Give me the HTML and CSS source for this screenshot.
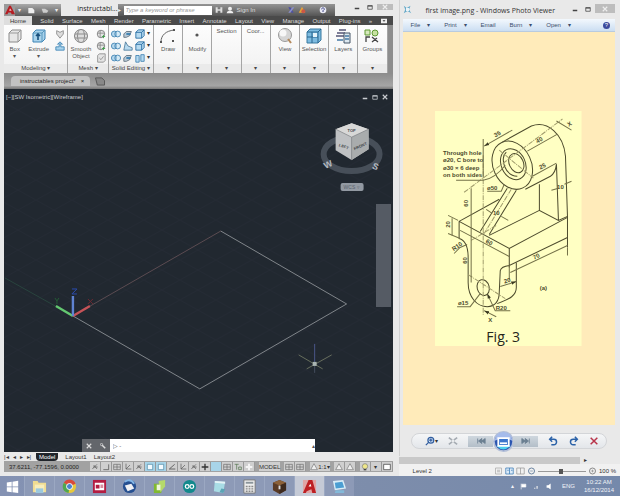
FILE: index.html
```html
<!DOCTYPE html>
<html lang="en">
<head>
  <meta charset="utf-8">
  <title>Desktop</title>
  <link rel="stylesheet" href="styles.css">
</head>
<body>
  <svg class="defs" aria-hidden="true">
    <symbol id="box" viewBox="0 0 16 16"><path d="M2 5l3-3h9v9l-3 3H2z" fill="#e6e6e6" stroke="#8a8a8a"/><path d="M2 5h9v9M11 5l3-3" fill="none" stroke="#999"/></symbol>
    <symbol id="bluebox" viewBox="0 0 16 16"><path d="M2 5l3-3h9v9l-3 3H2z" fill="#a9d3ec" stroke="#3c83b5"/><path d="M2 5h9v9M11 5l3-3" fill="none" stroke="#5797bd"/><path d="M7 12V6M5 8l2-2 2 2" fill="none" stroke="#174f7c" stroke-width="1.6"/></symbol>
    <symbol id="ball" viewBox="0 0 16 16"><circle cx="8" cy="8" r="6.5" fill="#ddd" stroke="#858585"/><path d="M2 6h12M2 10h12M6 2c-2 4-2 8 0 12M10 2c2 4 2 8 0 12" fill="none" stroke="#8d8d8d"/></symbol>
    <symbol id="union" viewBox="0 0 12 12"><circle cx="4" cy="6" r="3.5" fill="#b5d8ee" stroke="#3c7fb0"/><circle cx="8" cy="6" r="3.5" fill="#d4eaf6" stroke="#3c7fb0"/><path d="M6 3v6" stroke="#3c7fb0"/></symbol>
    <symbol id="face" viewBox="0 0 12 12"><path d="M1 6l3-3h6L8 8 4 10H1z" fill="#b9c9d6" stroke="#5a6b79"/><path d="M4 6h5" stroke="#2e78ad" stroke-width="2"/></symbol>
    <symbol id="cube" viewBox="0 0 12 12"><path d="M1 4l3-3h7v7l-3 3H1z" fill="#b7daf0" stroke="#1f669e"/><path d="M1 4h7v7M8 4l3-3" fill="none" stroke="#1f669e"/></symbol>
    <symbol id="meshplus" viewBox="0 0 12 12"><circle cx="6" cy="6" r="4.5" fill="#e5e5e5" stroke="#777"/><path d="M2 5h8M5 2v8" stroke="#888"/><path d="M7 9h4M9 7v4" stroke="#3a9a45"/></symbol>
    <symbol id="gridbox" viewBox="0 0 12 12"><path d="M1 2h10v8H1zM6 2v8M1 6h10" fill="none" stroke="#6b6b6b"/></symbol>
    <symbol id="axis" viewBox="0 0 12 12"><path d="M3 1v8h8M3 9l6-6" fill="none" stroke="#555"/></symbol>
    <symbol id="plus" viewBox="0 0 12 12"><path d="M6 1v10M1 6h10" stroke="#333" stroke-width="2"/></symbol>
    <symbol id="tri" viewBox="0 0 12 12"><path d="M6 1l5 9H1z" fill="#eee" stroke="#777"/></symbol>
    <symbol id="snap" viewBox="0 0 12 12"><path d="M2 9l7-7M4 3l5 6M3 6h7" fill="none" stroke="#555"/></symbol>
    <symbol id="min" viewBox="0 0 8 8"><path d="M1 6h6" stroke="currentColor" stroke-width="2"/></symbol>
    <symbol id="max" viewBox="0 0 8 8"><path d="M1 2h6v5H1zM1 3h6" fill="none" stroke="currentColor"/></symbol>
    <symbol id="close" viewBox="0 0 8 8"><path d="M1 1l6 6M7 1L1 7" stroke="currentColor" stroke-width="1.5"/></symbol>
  </svg>

  <div class="desktop">
    <!-- CAD window -->
    <section class="cad">
      <header class="cad-title">
        <button class="cad-logo" aria-label="Application menu"><svg viewBox="0 0 12 12"><path d="M0 11L5 1h2l5 10H8L7 9H4l-1 2z" fill="#b51c22"/><path d="M5 7l1-3 2 3z" fill="#f4c8c8"/></svg></button>
        <div class="quick">
          <span>▾</span>
          <svg viewBox="0 0 12 12"><path d="M2 3h6l3 3v5H2z" fill="#eee"/></svg>
          <svg viewBox="0 0 12 12"><path d="M1 4h5l5 3-2 3H3z" fill="#ccc"/></svg>
          <span>▾</span>
        </div>
        <h1 class="cad-name">instructabl...</h1>
        <div class="infobar">
          <span>▸</span>
          <input class="search" type="text" aria-label="Search" placeholder="Type a keyword or phrase">
          <svg viewBox="0 0 12 12"><path d="M1 2h3v3h4V2h3v8H8V7H4v3H1z" fill="#ddd"/></svg>
          <svg viewBox="0 0 12 12"><circle cx="6" cy="4" r="3" fill="#eee"/><path d="M1 11c0-5 10-5 10 0z" fill="#eee"/></svg>
          <a href="#" class="signin">Sign In</a>
          <svg viewBox="0 0 12 12"><path d="M2 2h3l5 8H7z" fill="#4b4ea8"/><path d="M8 2h3L5 10H2z" fill="#8a8ecb"/></svg>
          <svg viewBox="0 0 12 12"><path d="M6 1l5 9H1z" fill="#e5a43b"/><circle cx="8" cy="8" r="3" fill="#cc5746"/></svg>
          <svg viewBox="0 0 12 12" class="help"><circle cx="6" cy="6" r="5" fill="#e9eaf5"/><path d="M4 5c0-3 4-3 4 0L6 7v2" fill="none" stroke="#3c4284" stroke-width="1.5"/></svg>
        </div>
        <div class="win-buttons">
          <button aria-label="Minimize"><svg><use href="#min"/></svg></button>
          <button aria-label="Maximize"><svg><use href="#max"/></svg></button>
          <button class="win-close" aria-label="Close"><svg><use href="#close"/></svg></button>
        </div>
      </header>

      <nav class="ribbon-tabs">
        <button class="active">Home</button>
        <button>Solid</button>
        <button>Surface</button>
        <button>Mesh</button>
        <button>Render</button>
        <button>Parametric</button>
        <button>Insert</button>
        <button>Annotate</button>
        <button>Layout</button>
        <button>View</button>
        <button>Manage</button>
        <button>Output</button>
        <button>Plug-ins</button>
        <button>»</button>
        <button aria-label="Ribbon display"><svg viewBox="0 0 10 8"><path d="M1 1h8v6H1z" fill="#eee"/><path d="M3 3h4L5 5z" fill="#333"/></svg></button>
      </nav>

      <div class="ribbon">
        <div class="panel">
          <div class="tools">
            <button class="tool"><svg><use href="#box"/></svg>Box<i>▾</i></button>
            <button class="tool"><svg><use href="#bluebox"/></svg>Extrude<i>▾</i></button>
            <div class="mini one">
              <button aria-label="Polysolid"><svg viewBox="0 0 12 12"><path d="M2 2l4 2 4-2v4l-4 5-4-5z" fill="#ddd" stroke="#888"/></svg></button>
              <button aria-label="Presspull"><svg viewBox="0 0 12 12"><path d="M1 7h4V3L3 4l3-3 3 3-2-1v4h4v4H1z" fill="#a9d3ec" stroke="#3c83b5"/></svg></button>
            </div>
          </div>
          <div class="panel-name">Modeling <i>▾</i></div>
        </div>
        <div class="panel">
          <div class="tools">
            <button class="tool"><svg><use href="#ball"/></svg>Smooth<br>Object</button>
            <div class="mini one">
              <button aria-label="Smooth more"><svg><use href="#meshplus"/></svg></button>
              <button aria-label="Smooth less"><svg><use href="#meshplus"/></svg></button>
              <button aria-label="Refine mesh"><svg viewBox="0 0 12 12"><path d="M2 3l2-2h7v8l-2 2H2z" fill="#e4e4e4" stroke="#888"/><path d="M4 6l2 2 3-4" fill="none" stroke="#888"/></svg></button>
            </div>
          </div>
          <div class="panel-name">Mesh <i>▾</i></div>
        </div>
        <div class="panel">
          <div class="tools">
            <div class="mini three">
              <button aria-label="Union"><svg><use href="#union"/></svg></button>
              <button aria-label="Slice"><svg><use href="#face"/></svg></button>
              <button aria-label="Extrude faces"><svg><use href="#cube"/></svg></button>
              <i>▾</i>
              <button aria-label="Subtract"><svg><use href="#union"/></svg></button>
              <button aria-label="Thicken"><svg viewBox="0 0 12 12"><path d="M3 1l3 5 5 2v3H1z" fill="#b7daf0" stroke="#4b7797"/></svg></button>
              <button aria-label="Extract edges"><svg><use href="#cube"/></svg></button>
              <i>▾</i>
              <button aria-label="Intersect"><svg><use href="#union"/></svg></button>
              <button aria-label="Interfere"><svg><use href="#face"/></svg></button>
              <button aria-label="Separate"><svg viewBox="0 0 12 12"><path d="M1 3h4v8H1zM7 2h4v8H7z" fill="#b7daf0" stroke="#3c7fb0"/></svg></button>
              <i>▾</i>
            </div>
          </div>
          <div class="panel-name">Solid Editing <i>▾</i></div>
        </div>
        <div class="panel">
          <button class="tool"><svg viewBox="0 0 16 16"><path d="M1 14C1 7 6 3 14 2" fill="none" stroke="#666"/><path d="M0 13h2v2H0zM13 1h2v2h-2zM12 12h2v2h-2z" fill="#555"/></svg>Draw</button>
          <div class="panel-name"><i>▾</i></div>
        </div>
        <div class="panel">
          <button class="tool"><svg viewBox="0 0 16 16"><circle cx="8" cy="7" r="1.6" fill="#555"/></svg>Modify</button>
          <div class="panel-name"><i>▾</i></div>
        </div>
        <div class="panel">
          <button class="tool">Section</button>
          <div class="panel-name"><i>▾</i></div>
        </div>
        <div class="panel">
          <button class="tool">Coor...</button>
          <div class="panel-name"><i>▾</i></div>
        </div>
        <div class="panel">
          <button class="tool"><svg viewBox="0 0 16 16"><circle cx="8" cy="7" r="6.5" fill="#d5d5d5" stroke="#999"/><circle cx="6" cy="5" r="3.5" fill="#f7f7f7"/><path d="M11 11l3 4" stroke="#b48a5d" stroke-width="2"/></svg>View</button>
          <div class="panel-name"><i>▾</i></div>
        </div>
        <div class="panel">
          <button class="tool"><svg viewBox="0 0 16 16"><path d="M1 4l3-3h11v11l-3 3H1z" fill="#7dbbe0" stroke="#38789f"/><path d="M1 4h11v11M12 4l3-3M1 9h11M6 4v11" fill="none" stroke="#27658e"/><path d="M7 5h4v4H7z" fill="#e5f3fa"/></svg>Selection</button>
          <div class="panel-name"><i>▾</i></div>
        </div>
        <div class="panel">
          <button class="tool"><svg viewBox="0 0 16 16"><path d="M4 2h7M2 5h8M1 8h8" stroke="#557" stroke-width="1.6"/><path d="M9 5h6v10H9z" fill="#dde8f0" stroke="#456"/><path d="M10 8h4M10 11h4M2 12h6" stroke="#4679a5" stroke-width="1.5"/></svg>Layers</button>
          <div class="panel-name"><i>▾</i></div>
        </div>
        <div class="panel">
          <button class="tool"><svg viewBox="0 0 16 16"><path d="M1 2h5v5H1z" fill="#d7e9bd" stroke="#5e9a33"/><circle cx="11" cy="5" r="3" fill="#c7e2a1" stroke="#5e9a33"/><path d="M2 14v-5h4M8 9l6 5M13 10l-5 4" fill="none" stroke="#444" stroke-width="1.3"/></svg>Groups</button>
          <div class="panel-name"><i>▾</i></div>
        </div>
      </div>

      <div class="doc-tabs">
        <div class="doc-tab">instructables project* <button aria-label="Close drawing">×</button></div>
        <button class="new-tab" aria-label="New drawing"><svg viewBox="0 0 12 10"><path d="M1 1h7l3 3v5H3z" fill="#888" stroke="#555"/></svg></button>
      </div>

      <main class="canvas">
        <svg class="model" viewBox="4 89 389 363">
          <defs>
            <pattern id="iso" width="36" height="20" patternUnits="userSpaceOnUse">
              <path d="M0 0l36 20M0 20L36 0" stroke="#272e37" stroke-width=".6"/>
            </pattern>
          </defs>
          <rect x="4" y="89" width="389" height="363" fill="url(#iso)"/>
          <path d="M5 278l68 38" stroke="#29443e"/>
          <path d="M73 316l148-85" stroke="#5b4b51"/>
          <path d="M221 231l126 73-147 85L73 316" fill="none" stroke="#81868b"/>
          <path d="M73 316l-17-10" stroke="#64c871" stroke-width="2.4"/>
          <path d="M73 316l17-10" stroke="#c65358" stroke-width="2.4"/>
          <path d="M73 316v-20" stroke="#5f83d2" stroke-width="2.4"/>
          <g fill="none" stroke-width="1">
            <path d="M55 298l2 3 2-3M57 301v3" stroke="#245c35"/>
            <path d="M88 299l5 5M93 299l-5 5" stroke="#6d2831"/>
            <path d="M72 289h5l-5 5h5" stroke="#2a4bb0"/>
          </g>
          <path d="M315 344v18" stroke="#4a5688"/>
          <path d="M315 364v9" stroke="#444d5c"/>
          <path d="M299 355l24 14M307 369l25-14" stroke="#666d5c"/>
          <path d="M313 362h4v4h-4z" fill="#aab5b2"/>
          <!-- view cube -->
          <ellipse cx="352" cy="154" rx="28" ry="17" fill="none" stroke="#474f59" stroke-width="6"/>
          <path d="M336 129l16-6 17 6v20l-17 11-16-10z" fill="#bfc1c3"/>
          <path d="M336 129l16-6 17 6-17 8z" fill="#d8d8d7"/>
          <path d="M352 137l17-8v20l-17 11z" fill="#a9acad"/>
          <path d="M336 129l16 8 17-8M352 137v23" fill="none" stroke="#7c7f83" stroke-width=".7"/>
          <g class="cube-text">
            <text x="348" y="132">TOP</text>
            <text x="339" y="146" transform="rotate(20 339 146)">LEFT</text>
            <text x="355" y="150" transform="rotate(-24 355 150)">FRONT</text>
          </g>
          <g class="compass">
            <text x="326" y="169" transform="rotate(-25 326 169)">W</text>
            <text x="372" y="168" transform="rotate(25 372 168)">S</text>
          </g>
          <rect x="341" y="183" width="23" height="8" rx="2" fill="#9299a2"/>
          <text class="wcs" x="344" y="189">WCS ▿</text>
        </svg>
        <div class="view-head">
          <span>[−][SW Isometric][Wireframe]</span>
          <div class="view-buttons">
            <button aria-label="Minimize view"><svg><use href="#min"/></svg></button>
            <button aria-label="Restore view"><svg><use href="#max"/></svg></button>
            <button aria-label="Close view"><svg><use href="#close"/></svg></button>
          </div>
        </div>
        <div class="nav-bar"></div>
        <div class="command">
          <button aria-label="Close command line"><svg><use href="#close"/></svg></button>
          <button aria-label="Customize"><svg viewBox="0 0 8 8"><circle cx="2" cy="2" r="1.5" fill="none" stroke="currentColor"/><path d="M3 3l4 4" fill="none" stroke="currentColor" stroke-width="2"/></svg></button>
          <input type="text" aria-label="Command" value="▷ -">
          <span>▴</span>
        </div>
      </main>

      <div class="layouts">
        <div class="steps"><button>|◂</button><button>◂</button><button>▸</button><button>▸|</button></div>
        <button class="layout active">Model</button>
        <button class="layout">Layout1</button>
        <button class="layout">Layout2</button>
      </div>

      <footer class="status">
        <span class="coords">37.6211, -77.1596, 0.0000</span>
        <div class="toggles">
          <button aria-label="Infer"><svg><use href="#snap"/></svg></button>
          <button aria-label="Snap"><svg viewBox="0 0 12 12"><path d="M2 10h8V2" fill="none" stroke="#444"/></svg></button>
          <button aria-label="Grid"><svg><use href="#gridbox"/></svg></button>
          <button aria-label="Ortho"><svg><use href="#axis"/></svg></button>
          <button aria-label="Polar"><svg><use href="#snap"/></svg></button>
          <button class="on" aria-label="Object snap"><svg viewBox="0 0 12 12"><path d="M2 2h8v8H2z" fill="#f4fbff" stroke="#4885a3"/></svg></button>
          <button class="on" aria-label="3D snap"><svg viewBox="0 0 12 12"><path d="M2 2h8v8H2z" fill="#f4fbff" stroke="#4885a3"/></svg></button>
          <button aria-label="Tracking"><svg viewBox="0 0 12 12"><path d="M10 2L2 9h9" fill="none" stroke="#333"/></svg></button>
          <button aria-label="Dynamic UCS"><svg><use href="#axis"/></svg></button>
          <button aria-label="Dynamic input"><svg><use href="#snap"/></svg></button>
          <button aria-label="Lineweight"><svg><use href="#plus"/></svg></button>
          <button class="on" aria-label="Transparency"></button>
          <button aria-label="Quick properties"><svg><use href="#gridbox"/></svg></button>
          <button aria-label="Cycling"><svg viewBox="0 0 12 12"><path d="M1 2h6M4 2v8M7 6h4v4H7z" fill="none" stroke="#4d7047"/></svg></button>
          <button aria-label="Monitor"><svg viewBox="0 0 12 12"><path d="M6 1v10M1 6h10" stroke="#f4f4f4" stroke-width="3"/></svg></button>
        </div>
        <button class="model-btn">MODEL</button>
        <div class="toggles pair">
          <button aria-label="Layouts"><svg><use href="#gridbox"/></svg></button>
          <button aria-label="Drawings"><svg><use href="#gridbox"/></svg></button>
        </div>
        <button class="scale"><svg><use href="#tri"/></svg>1:1▾</button>
        <div class="toggles pair">
          <button aria-label="Annotation"><svg><use href="#tri"/></svg></button>
          <button aria-label="Auto scale"><svg><use href="#tri"/></svg></button>
        </div>
        <div class="toggles trio">
          <button aria-label="Isolate"><svg viewBox="0 0 12 12"><circle cx="6" cy="5" r="4" fill="#eee68a" stroke="#777"/><path d="M4 10h4" stroke="#444" stroke-width="2"/></svg></button>
          <button aria-label="Menu">▾</button>
          <button aria-label="Clean screen"><svg viewBox="0 0 12 12"><path d="M1 2h10v8H1z" fill="#fff" stroke="#333"/></svg></button>
        </div>
      </footer>
    </section>

    <!-- Photo viewer -->
    <div class="side">
      <section class="viewer">
        <header class="viewer-title">
          <svg class="viewer-icon" viewBox="0 0 12 12"><path d="M1 1l4 3 5-3-2 5 3 5-5-3-5 3 2-5z" fill="#64a9c9"/><path d="M4 4h4v4H4z" fill="#e8f4fa"/></svg>
          <h2>first image.png - Windows Photo Viewer</h2>
          <div class="win-buttons">
            <button aria-label="Minimize"><svg><use href="#min"/></svg></button>
            <button aria-label="Maximize"><svg><use href="#max"/></svg></button>
            <button class="win-close" aria-label="Close"><svg><use href="#close"/></svg></button>
          </div>
        </header>
        <nav class="menu">
          <button>File<i>▾</i></button>
          <button>Print<i>▾</i></button>
          <button>Email</button>
          <button>Burn<i>▾</i></button>
          <button>Open<i>▾</i></button>
          <button class="menu-help" aria-label="Help">?</button>
        </nav>
        <div class="photo">
          <svg class="figure" viewBox="436 111 146 235">
            <defs>
              <marker id="arr" viewBox="0 0 6 6" refX="6" refY="3" markerWidth="5" markerHeight="5" orient="auto-start-reverse"><path d="M0 1l6 2-6 2z" fill="#3b3a22"/></marker>
            </defs>
            <rect x="436" y="111" width="146" height="235" fill="#ffffc3"/>
            <g class="outline">
              <ellipse cx="513" cy="165" rx="19" ry="25" transform="rotate(-25 513 165)"/>
              <ellipse cx="514" cy="164" rx="12" ry="16" transform="rotate(-25 514 164)"/>
              <path d="M507 152c-7 6-1 24 11 24"/>
              <ellipse cx="517" cy="163" rx="7" ry="10" transform="rotate(-25 517 163)"/>
              <path d="M503 142l29-16c16-6 32 8 34 30l2 60v31"/>
              <path d="M526 189l25-13q5-3 6-12l2 56M540 184v26l19 10 9-4M540 210l-50 25"/>
              <path d="M508 188l-27 43M517 190l-27 44"/>
              <path d="M460 221l40-22M460 221l50 27 58-31M460 221v17c7 2 9 9 9 19v25c0 15 9 24 19 24 8 0 12-6 12-14l1-22q1-4 9-5l58-28M510 248v19"/>
              <path d="M517 262v25c0 8-6 11-19 16"/>
              <ellipse cx="484" cy="287" rx="6" ry="8" transform="rotate(-15 484 287)"/>
            </g>
            <g class="center">
              <path d="M484 155v160M465 192l98-73M500 150l34 28M512 189l-27 44M469 274l37 24M472 240l25-15"/>
            </g>
            <g class="dim">
              <path d="M485 146l28-16M528 151l30-17M533 176l24-13M472 188v94M453 218v17M461 230l49 26M511 272l57-27M501 286l16-5" marker-start="url(#arr)" marker-end="url(#arr)"/>
              <path d="M484 139v38M457 180h27q12-2 22-15M449 215l10 5M449 233l12 5M510 265v14M568 247v8"/>
              <path d="M488 191h14l3-7M509 220l-7-4M487 209l6 4M552 190l7-2M572 181l-7 3M455 253l6-6 7-3M458 306h13l10-13M511 310h-15l-8-17" marker-end="url(#arr)"/>
              <path d="M572 130l-15-9M497 316l-12-6" marker-end="url(#arr)"/>
            </g>
            <g class="dim-text">
              <text x="498" y="136" transform="rotate(-28 498 134)">35</text>
              <text x="540" y="142" transform="rotate(-28 540 140)">40</text>
              <text x="543" y="168" transform="rotate(-25 543 166)">25</text>
              <text x="561" y="189">10</text>
              <text x="570" y="126" transform="rotate(-30 570 124)">X</text>
              <text x="493" y="190">ø50</text>
              <text x="467" y="205" transform="rotate(-90 467 203)">60</text>
              <text x="449" y="226" transform="rotate(-90 449 224)">20</text>
              <text x="497" y="215">10</text>
              <text x="458" y="248" transform="rotate(-35 458 246)">R10</text>
              <text x="490" y="244" transform="rotate(28 490 242)">60</text>
              <text x="466" y="262" transform="rotate(-90 466 260)">60</text>
              <text x="537" y="258" transform="rotate(-28 537 256)">70</text>
              <text x="508" y="282" transform="rotate(-15 508 280)">20</text>
              <text x="544" y="289">(a)</text>
              <text x="464" y="304">ø15</text>
              <text x="502" y="309">R20</text>
              <text x="491" y="321">X</text>
            </g>
            <g class="note">
              <text x="444" y="155">Through hole</text>
              <text x="444" y="162">ø20, C bore to</text>
              <text x="444" y="170">ø30 × 6 deep</text>
              <text x="444" y="177">on both sides</text>
            </g>
            <text class="caption" x="504" y="341">Fig. 3</text>
          </svg>
        </div>
        <div class="controls">
          <div class="pill">
            <button aria-label="Zoom"><svg viewBox="0 0 12 12"><circle cx="7" cy="5" r="3.5" fill="#dceafa" stroke="#305d9f" stroke-width="1.5"/><path d="M4 8l-3 3M5 5h4M7 3v4" stroke="#305d9f" stroke-width="1.5"/></svg><i>▾</i></button>
            <button aria-label="Fit"><svg viewBox="0 0 12 12"><path d="M1 2l4 3M11 2L7 5M1 10l4-3M11 10L7 7" stroke="#a5abb2" stroke-width="2"/></svg></button>
            <div class="playback">
              <button aria-label="Previous"><svg viewBox="0 0 12 12"><path d="M2 3v6M11 3v6L7 6zM7 3v6L3 6z" fill="#6b7f91" stroke="#6b7f91"/></svg></button>
              <button class="play" aria-label="Slide show"><svg viewBox="0 0 24 24"><circle cx="12" cy="12" r="11" fill="#2b55b0" stroke="#b3bfd8" stroke-width="2"/><path d="M2 11a10 10 0 0 1 20 0q-10-5-20 0z" fill="#a5bbeb"/><path d="M4 17q8 8 16 0-8-5-16 0z" fill="#4ed3f0"/><path d="M6 8h12v9H6z" fill="#3c75cc" stroke="#fff" stroke-width="2"/><path d="M8 14h8" stroke="#fff" stroke-width="2"/></svg></button>
              <button aria-label="Next"><svg viewBox="0 0 12 12"><path d="M10 3v6M1 3v6l4-3zM5 3v6l4-3z" fill="#6b7f91" stroke="#6b7f91"/></svg></button>
            </div>
            <button aria-label="Rotate left"><svg viewBox="0 0 12 12"><path d="M3 4h4a3 3 0 0 1 0 6.500H4M5 1L2 4l3 3" fill="none" stroke="#2b62a8" stroke-width="1.8"/></svg></button>
            <button aria-label="Rotate right"><svg viewBox="0 0 12 12"><path d="M9 4H5a3 3 0 0 0 0 6.500h3M7 1l3 3-3 3" fill="none" stroke="#2b62a8" stroke-width="1.8"/></svg></button>
            <button class="delete" aria-label="Delete"><svg viewBox="0 0 12 12"><path d="M2 2l8 8M10 2l-8 8" stroke="#b8344a" stroke-width="1.8"/></svg></button>
          </div>
        </div>
      </section>

      <section class="back-window">
        <div class="hscroll"><div class="thumb"></div><button aria-label="Scroll right">▸</button></div>
        <footer class="doc-status">
          <span class="level">Level 2</span>
          <svg viewBox="0 0 12 10"><path d="M2 1h8v8H2zM4 4h4M4 6h4" fill="none" stroke="#aaa"/></svg>
          <svg viewBox="0 0 12 10"><path d="M1 1h10v8H1zM6 1v8M3 4h2M8 4h2" fill="#dcebf8" stroke="#3c7cb5"/></svg>
          <svg viewBox="0 0 12 10"><path d="M1 1h10v8H1zM6 1v8" fill="none" stroke="#999"/></svg>
          <svg viewBox="0 0 12 12"><circle cx="6" cy="6" r="4.5" fill="none" stroke="#6b84a0" stroke-width="1.5"/><path d="M4 6h4" stroke="#6b84a0"/></svg>
          <input type="range" aria-label="Zoom" min="0" max="100" value="48">
          <svg viewBox="0 0 12 12"><circle cx="6" cy="6" r="4.5" fill="none" stroke="#888" stroke-width="1.5"/><path d="M4 6h4M6 4v4" stroke="#888"/></svg>
          <span class="percent">100 %</span>
        </footer>
      </section>
    </div>
  </div>

  <div class="taskbar">
    <button class="start" aria-label="Start"><svg viewBox="0 0 16 16"><path d="M1 3l6-1v6H1zM8 2l7-1v7H8zM1 9h6v6l-6-1zM8 9h7v7l-7-1z" fill="#fff"/></svg></button>
    <div class="apps">
      <button aria-label="Explorer"><svg viewBox="0 0 16 16"><path d="M1 2h5l1 2h8v10H1z" fill="#f0dc91"/><path d="M3 6h10v8H3z" fill="#f8edbb"/><path d="M4 10h8v5H4z" fill="#9cc9df"/></svg></button>
      <button aria-label="Chrome"><svg viewBox="0 0 16 16"><circle cx="8" cy="8" r="7" fill="#e7c93d"/><path d="M8 8L2 4a7 7 0 0 1 12.500 1z" fill="#d84a3c"/><path d="M8 8L2 4a7 7 0 0 0 5 11z" fill="#50a650"/><circle cx="8" cy="8" r="3.2" fill="#4b83cd" stroke="#fff"/></svg></button>
      <button aria-label="Recorder"><svg viewBox="0 0 16 16"><path d="M1 1h14v14H1z" fill="#b41d42"/><path d="M3 4h10v8H3z" fill="#fff"/><path d="M4 6h4v4H4zM9 6h3v1H9zM9 8h3v1H9z" fill="#b41d42"/></svg></button>
      <button aria-label="Mail"><svg viewBox="0 0 16 16"><circle cx="8" cy="8" r="7" fill="#254f91"/><path d="M3 7l7-2 3 5-7 3z" fill="#f0f1f4"/><path d="M3 3q6-4 10 2" fill="none" stroke="#83b6e6" stroke-width="2"/></svg></button>
      <button aria-label="Editor"><svg viewBox="0 0 16 16"><path d="M2 5h8v10H2z" fill="#81b931"/><path d="M7 2l7-1v7l-5 6z" fill="#b5d96a"/><path d="M5 6h4v6H5z" fill="#eef6d9"/></svg></button>
      <button aria-label="Arduino"><svg viewBox="0 0 16 16"><circle cx="8" cy="8" r="7" fill="#12898d"/><circle cx="5.5" cy="8" r="2" fill="none" stroke="#fff" stroke-width="1.3"/><circle cx="10.5" cy="8" r="2" fill="none" stroke="#fff" stroke-width="1.3"/></svg></button>
      <button aria-label="Notepad"><svg viewBox="0 0 16 16"><path d="M3 2l11 1-2 12-10-2z" fill="#a8dce5"/><path d="M3 2l11 1v2L3 4z" fill="#e5f3f6"/><path d="M10 10l4 1-2 4-4-1z" fill="#5ba4b6"/></svg></button>
      <button aria-label="Calculator"><svg viewBox="0 0 16 16"><path d="M2 1h12v14H2z" fill="#eee" stroke="#777"/><path d="M4 3h8v2H4z" fill="#8a949a"/><path d="M4 8h8M4 10.500h8M4 13h8" stroke="#888" stroke-dasharray="2 1" stroke-width="1.5"/></svg></button>
      <button aria-label="Minecraft"><svg viewBox="0 0 16 16"><path d="M1 4l7-3 7 3v8l-7 4-7-4z" fill="#593a25"/><path d="M1 4l7-3 7 3-7 3z" fill="#8b6038"/><path d="M8 7l7-3v8l-7 4z" fill="#3d291d"/><path d="M7 7h2v4H7z" fill="#ddd"/></svg></button>
      <button class="current" aria-label="AutoCAD"><svg viewBox="0 0 16 16"><path d="M1 1h14v14H1z" fill="#e0a5a5"/><path d="M1 15L7 1h4l4 14h-4l-1-4-5 2-1 2z" fill="#bd1f23"/><path d="M7 8l2-3 1 3z" fill="#fff"/></svg></button>
      <button aria-label="Photo Viewer"><svg viewBox="0 0 16 16"><path d="M1 2l11-1 3 9-12 2z" fill="#d9edf7"/><path d="M3 4l8-1 2 6-9 1z" fill="#4b9ed2"/><path d="M4 12h9v3H3z" fill="#83b9d9"/></svg></button>
    </div>
    <div class="tray">
      <span>▴</span>
      <svg viewBox="0 0 12 12"><path d="M2 1v10M3 2h7v5H3z" fill="#fff" stroke="#fff"/></svg>
      <svg viewBox="0 0 12 12"><path d="M2 10h2V8H2zM6 10h2V5H6z" fill="#eee"/></svg>
      <svg viewBox="0 0 12 12"><path d="M1 4h3l4-3v10L4 8H1z" fill="#fff"/></svg>
      <span class="lang">ENG</span>
      <div class="clock"><span>10:22 AM</span><span>16/12/2014</span></div>
    </div>
  </div>
</body>
</html>
```

FILE: styles.css
```css
* {
  box-sizing: border-box;
}

body {
  margin: 0;
  height: 100vh;
  display: flex;
  flex-direction: column;
  background: #e9e9e9;
  color: #333;
  font-family: "Liberation Sans", Arial, sans-serif;
  font-size: 6px;
  line-height: 8px;
  overflow: hidden;
}

button,
input {
  font: inherit;
  color: inherit;
  margin: 0;
  padding: 0;
  border: none;
  background: none;
}

button {
  display: flex;
  align-items: center;
  justify-content: center;
  white-space: nowrap;
}

i {
  font-style: normal;
}

svg {
  display: block;
  flex: none;
}

.defs {
  width: 0;
  height: 0;
  position: absolute;
}

.desktop {
  flex: 1;
  min-height: 0;
  display: grid;
  grid-template-columns: minmax(0, 9fr) minmax(0, 5fr);
}

/* CAD window */
.cad {
  min-height: 0;
  display: flex;
  flex-direction: column;
  padding: 4px 6px 4px 4px;
}

.cad-title {
  display: flex;
  height: 12px;
  color: #eee;
}

.cad-logo {
  width: 11px;
  background: #9a9a9a;
}

.cad-logo svg {
  width: 10px;
  height: 10px;
}

.quick {
  width: 46px;
  display: flex;
  align-items: center;
  justify-content: space-around;
  background: linear-gradient(#aaa, #5c5c5c);
}

.quick svg,
.infobar svg {
  width: 8px;
  height: 8px;
}

.cad-name {
  flex: 1;
  margin: 0;
  font-family: "Open Sans", sans-serif;
  font-size: 7px;
  line-height: 9px;
  font-weight: 400;
  text-align: right;
  color: #222;
}

.infobar {
  width: 217px;
  display: flex;
  align-items: center;
  gap: 3px;
  padding-right: 8px;
  background: linear-gradient(#949494, #555);
}

.search {
  width: 88px;
  height: 9px;
  padding: 0 2px;
  background: #fff;
}

.search::placeholder {
  color: #999;
  font-style: italic;
}

.signin {
  flex: 1;
  color: #ddd;
  text-decoration: none;
}

.help {
  margin-left: 10px;
}

.win-buttons {
  display: flex;
  color: #444;
}

.win-buttons button {
  width: 13px;
  height: 6px;
}

.win-buttons svg {
  width: 6px;
  height: 6px;
}

.cad-title .win-buttons {
  width: 58px;
  justify-content: flex-end;
}

.win-buttons .win-close {
  width: 16px;
  background: #bdbdbd;
  color: #eee;
}

.ribbon-tabs {
  display: flex;
  justify-content: space-between;
  height: 9px;
  padding-right: 4px;
  background: #4a4a4a;
  color: #ddd;
}

.ribbon-tabs .active {
  width: 28px;
  background: #dedede;
  color: #333;
}

.ribbon-tabs svg {
  width: 8px;
  height: 6px;
}

.ribbon {
  height: 48px;
  display: grid;
  grid-template-columns: minmax(0, 64fr) minmax(0, 40fr) minmax(0, 45fr) repeat(8, minmax(0, 29fr));
  padding-right: 5px;
  background: #8d8d8d;
}

.panel {
  display: flex;
  flex-direction: column;
  justify-content: space-between;
  border-right: 1px solid #a5a5a5;
  background: linear-gradient(#fdfdfd, #f1f1f1);
}

.tools {
  display: flex;
  justify-content: space-around;
}

.tool {
  flex-direction: column;
  justify-content: flex-start;
  padding-top: 3px;
  line-height: 7px;
  color: #555;
}

.tool svg {
  width: 16px;
  height: 16px;
  margin-bottom: 2px;
}

.mini {
  display: grid;
  gap: 2px;
  padding-top: 4px;
  align-content: start;
}

.three {
  grid-template-columns: repeat(3, 10px) 4px;
}

.mini svg {
  width: 10px;
  height: 10px;
}

.panel-name {
  height: 9px;
  text-align: center;
  white-space: nowrap;
  background: #eaeaea;
  color: #444;
}

.doc-tabs {
  display: flex;
  align-items: center;
  gap: 4px;
  height: 16px;
  padding-left: 7px;
  background: linear-gradient(#8c8c8c, #a5a5a5 80%, #777);
}

.doc-tab {
  display: flex;
  align-items: center;
  gap: 5px;
  padding: 1px 6px 1px 9px;
  border-radius: 4px 4px 0 0;
  background: #c2c2c2;
  color: #222;
}

.new-tab svg {
  width: 12px;
  height: 9px;
}

.canvas {
  flex: 1;
  min-height: 0;
  position: relative;
  background: #212830;
}

.model {
  width: 100%;
  height: 100%;
}

.cube-text {
  font-size: 4px;
  font-weight: 700;
  fill: #44484c;
}

.compass {
  font-size: 9px;
  font-weight: 700;
  fill: #b5bac0;
}

.wcs {
  font-size: 5px;
  fill: #59616c;
}

.view-head {
  position: absolute;
  top: 4px;
  left: 2px;
  right: 5px;
  display: flex;
  justify-content: space-between;
  color: #c9ccd0;
}

.view-buttons {
  display: flex;
  gap: 4px;
}

.view-buttons svg {
  width: 6px;
  height: 6px;
}

.nav-bar {
  position: absolute;
  top: 115px;
  right: 2px;
  width: 15px;
  height: 103px;
  background: #555b64;
}

.command {
  position: absolute;
  left: 20%;
  right: 20%;
  bottom: 0;
  height: 13px;
  display: flex;
  align-items: center;
  background: #fff;
  color: #555;
}

.command button {
  width: 14px;
  height: 13px;
  background: #63666b;
  color: #ddd;
}

.command button svg {
  width: 6px;
  height: 6px;
}

.command input {
  flex: 1;
  min-width: 0;
  padding-left: 3px;
}

.layouts {
  display: flex;
  align-items: center;
  gap: 7px;
  height: 9px;
  color: #333;
}

.steps {
  display: flex;
  gap: 4px;
  width: 25px;
}

.layout.active {
  padding: 0 3px;
  border-radius: 0 0 4px 4px;
  background: #20242a;
  color: #fff;
}

.status {
  display: flex;
  align-items: center;
  gap: 4px;
  height: 11px;
  background: #a2a2a2;
}

.coords {
  width: 82px;
  padding-left: 5px;
  white-space: nowrap;
  color: #222;
}

.toggles {
  flex: 15;
  display: flex;
  height: 9px;
  background: #cfcfcf;
}

.toggles button {
  flex: 1;
  border-right: 1px solid #999;
}

.toggles svg,
.scale svg {
  width: 8px;
  height: 8px;
}

.toggles .on {
  background: #a8d4e8;
}

.pair {
  flex: 2;
}

.trio {
  flex: 3;
}

.model-btn,
.scale {
  height: 9px;
  background: #cfcfcf;
}

/* Photo viewer and the document window behind it */
.side {
  min-height: 0;
  display: flex;
  flex-direction: column;
}

.viewer {
  flex: 1;
  min-height: 0;
  display: flex;
  flex-direction: column;
  padding: 4px 5px 0 3px;
  border-left: 1px solid #d2d2d2;
}

.viewer-title {
  display: flex;
  height: 15px;
}

.viewer-icon {
  width: 9px;
  height: 9px;
  margin-top: 1px;
}

.viewer-title h2 {
  flex: 1;
  margin: 0;
  text-align: center;
  white-space: nowrap;
  font-family: "Open Sans", sans-serif;
  font-size: 7px;
  line-height: 13px;
  font-weight: 400;
  color: #333;
}

.viewer-title .win-buttons button {
  height: 9px;
}

.viewer-title .win-buttons .win-close {
  width: 20px;
}

.menu {
  display: flex;
  align-items: center;
  gap: 14px;
  height: 13px;
  padding: 0 5px 0 8px;
  border-bottom: 1px solid #b9cbdf;
  background: linear-gradient(#f3f8fd, #cbdef2);
  color: #3a4c6b;
}

.menu button {
  gap: 7px;
}

.menu .menu-help {
  width: 7px;
  height: 7px;
  margin-left: auto;
  border-radius: 50%;
  background: #3c4a9c;
  color: #fff;
}

.photo {
  flex: 1;
  min-height: 0;
  display: flex;
  align-items: center;
  justify-content: center;
  background: #ffebba;
}

.figure {
  width: 69%;
  height: 60%;
}

.outline {
  fill: none;
  stroke: #4d4b2d;
  stroke-width: 1;
}

.center {
  fill: none;
  stroke: #a09c6c;
  stroke-width: 1;
  stroke-dasharray: 5 1 1 1;
}

.dim {
  fill: none;
  stroke: #747148;
  stroke-width: 1;
}

.dim-text {
  font-size: 6px;
  font-weight: 700;
  text-anchor: middle;
  fill: #4d4b2d;
}

.note {
  font-size: 6px;
  font-weight: 700;
  fill: #4a482b;
}

.caption {
  font-family: "Open Sans", sans-serif;
  font-size: 14px;
  text-anchor: middle;
  fill: #26261b;
}

.controls {
  padding: 8px 8px 7px;
}

.pill {
  display: flex;
  align-items: center;
  justify-content: space-between;
  height: 16px;
  padding: 0 7px 0 13px;
  border: 1px solid #d3d5d8;
  border-radius: 8px;
  background: linear-gradient(#f5f6f7, #e3e6ea);
}

.pill svg {
  width: 10px;
  height: 10px;
}

.playback {
  display: flex;
  align-items: center;
}

.playback button {
  width: 25px;
  height: 11px;
  background: linear-gradient(#cfd7de, #b3bec8);
}

.playback .play {
  width: 20px;
  height: 20px;
  background: none;
}

.play svg {
  width: 21px;
  height: 21px;
}

.back-window {
  background: #f1f1f1;
}

.hscroll {
  display: flex;
  align-items: center;
  height: 8px;
  padding-right: 33px;
  background: #e9e9e9;
}

.thumb {
  flex: 1;
  height: 7px;
  margin-right: 4px;
  background: #c9c9c9;
}

.doc-status {
  display: flex;
  align-items: center;
  gap: 2px;
  height: 12px;
  padding: 2px 4px 0 14px;
}

.level {
  flex: 1;
}

.doc-status svg {
  width: 9px;
  height: 8px;
}

.doc-status input {
  appearance: none;
  width: 48px;
  height: 1px;
  background: #999;
}

.doc-status input::-webkit-slider-thumb {
  appearance: none;
  width: 4px;
  height: 5px;
  background: #555;
}

/* Taskbar */
.taskbar {
  display: flex;
  height: 20px;
  background: linear-gradient(90deg, #8492b3, #7d8dab 60%, #7589ab);
}

.start {
  width: 24px;
}

.start svg {
  width: 13px;
  height: 13px;
}

.apps {
  flex: 1;
  display: flex;
}

.apps button {
  width: 30px;
  border-left: 1px solid #9ba8c2;
  background: #8d9ab7;
}

.apps svg {
  width: 15px;
  height: 15px;
}

.apps .current {
  background: #c5cad6;
}

.tray {
  display: flex;
  align-items: center;
  gap: 6px;
  padding-right: 6px;
  color: #f2f4f8;
}

.tray svg {
  width: 7px;
  height: 7px;
}

.lang {
  margin: 0 3px;
}

.clock {
  display: flex;
  flex-direction: column;
  align-items: center;
}
```
